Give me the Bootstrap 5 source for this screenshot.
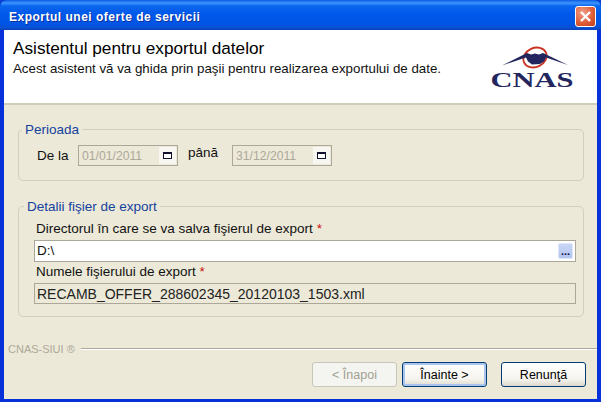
<!DOCTYPE html>
<html lang="ro">
<head>
    <meta charset="UTF-8">
    <title>Exportul unei oferte de servicii</title>
    <link href="https://cdn.jsdelivr.net/npm/bootstrap@5.3.2/dist/css/bootstrap.min.css" rel="stylesheet">
    <style>
        html, body { margin: 0; width: 601px; height: 402px; overflow: hidden; background: #0a3fd0; }
        body { font-family: "Liberation Sans", Arial, sans-serif; font-size: 13.5px; color: #111; line-height: 14px; }
        .xp-window { width: 601px; height: 402px; background: #0831d9; border-radius: 7px 7px 0 0; }
        .xp-title { height: 30px; padding: 3px 5px 0 9px; border-radius: 7px 7px 0 0;
            background: linear-gradient(180deg, #0a5ae0 0, #3d95ff 3px, #0a66ee 6px, #0058ea 14px, #0055e5 24px, #0a4fd0 28px, #0840b8 30px); }
        .xp-title-text { color: #fff; font-weight: 700; font-size: 12px; letter-spacing: .5px; text-shadow: 1px 1px 0 #0f2e9a; margin-top: 1px; }
        .xp-close { width: 21px; height: 21px; border: 1px solid #fff; border-radius: 3px; padding: 0;
            background: radial-gradient(circle at 35% 30%, #f0a08a, #e0603a 55%, #c03a18); }
        .xp-close svg { display: block; margin: 3px; }
        .xp-body { height: 369px; margin: 0 4px 3px 4px; background: #ece9d8; }
        .wiz-head { height: 75px; background: #fff; border-bottom: 2px solid #cfccb8; padding: 8px 22px 0 9px; }
        .wiz-heading { font-size: 17.2px; line-height: 20px; margin: 0; font-weight: 400; color: #000; }
        .wiz-sub { font-size: 13.3px; line-height: 14px; margin-top: 4px; }
        .wiz-logo { margin-top: 8px; flex: none; }
        .wiz-main { height: 243px; padding: 17px 13px 0 14px; }
        .grp { border: 1px solid #d0d0bf; border-radius: 5px; margin: 0; padding: 0 7px 0 15px; }
        .grp legend { float: none; width: auto; font-size: 13.5px; line-height: 15px; color: #15429e; margin: 0 0 0 -12px; padding: 0 3px; }
        .grp-period { height: 59px; }
        .grp-file { height: 118px; margin-top: 18px; }
        .grp-file legend { margin-left: -10px; }
        .period-row { padding-left: 3px; margin-top: 8px; }
        .lbl-from { width: 41px; }
        .lbl-to { width: 54px; padding-left: 10px; margin-top: -5px; }
        .date-box { width: 100px; height: 21px; border: 1px solid #aca899; padding: 0 1px 0 3px; color: #aca899; background: #ece9d8; font-size: 12.2px; }
        .date-btn { width: 17px; height: 17px; background: #f7f6f0; }
        .date-btn i { display: block; width: 9px; height: 7px; margin: 5px 4px; border: 1px solid #101030; border-top-width: 2px; background: #fff; }
        .field-lbl { height: 26px; padding: 8px 0 0 2px; }
        .req { color: #d01010; }
        .path-box { height: 22px; border: 1px solid #aca899; background: #fff; padding: 0 2px 0 2px; }
        .browse-btn { width: 15px; height: 16px; background: linear-gradient(180deg, #c9d6f5, #b2c5f0); border: 1px solid #dfe6f8; border-radius: 2px; color: #10104a; font-weight: 700; font-size: 11px; line-height: 14px; text-align: center; }
        .name-lbl { height: 21px; padding-top: 3px; }
        .name-box { height: 21px; border: 1px solid #aca899; background: #ece9d8; padding: 0 2px; color: #222; font-size: 14px; }
        .wiz-foot { height: 49px; }
        .brand-row { height: 12px; margin-top: -5px; padding-left: 4px; color: #aca899; font-size: 11px; }
        .brand-line { border-top: 1px solid #aca899; border-bottom: 1px solid #fff; height: 2px; margin-left: 6px; }
        .btn-row { margin-top: 7px; padding-right: 11px; gap: 5px; }
        .xp-btn { width: 85px; height: 25px; font-size: 12.5px; line-height: 14px; padding: 0; border: 1px solid #003c74; border-radius: 3px; color: #000;
            background: linear-gradient(180deg, #fff 0, #f5f4ee 70%, #dcd8cc 100%); }
        .xp-btn:disabled { border-color: #c9c7ba; color: #a1a192; background: #f4f4f0; opacity: 1; }
        .xp-btn-default { box-shadow: inset 0 0 0 2px #a9c4ee; }
        .xp-btn-last { margin-left: 9px; }
    </style>
</head>
<body>
    <div class="xp-window">
        <div class="xp-title d-flex align-items-center justify-content-between">
            <span class="xp-title-text">Exportul unei oferte de servicii</span>
            <button class="xp-close" type="button" aria-label="Inchide">
                <svg width="13" height="13" viewBox="0 0 13 13"><path d="M2 2 L11 11 M11 2 L2 11" stroke="#fff" stroke-width="2.4"/></svg>
            </button>
        </div>
        <div class="xp-body">
            <div class="wiz-head d-flex justify-content-between">
                <div>
                    <h1 class="wiz-heading">Asistentul pentru exportul datelor</h1>
                    <div class="wiz-sub">Acest asistent vă va ghida prin paşii pentru realizarea exportului de date.</div>
                </div>
                <svg class="wiz-logo" width="85" height="46" viewBox="0 -1 85 46">
                    <ellipse cx="45" cy="10.5" rx="12" ry="9.5" fill="none" stroke="#c8321e" stroke-width="1.8" transform="rotate(-25 45 10.5)"/>
                    <path d="M12 18.5 L37 6 L41 7.5 L45 6.5 L49 7.5 L53 6 L78 18 L56 10.5 L54 14.5 L50 17 L42 17.5 L38 14.5 L36 10.5 Z" fill="#23265e"/>
                    <text x="42" y="40" text-anchor="middle" font-family="Liberation Serif, serif" font-weight="700" font-size="22" fill="#23265e" textLength="83" lengthAdjust="spacingAndGlyphs">CNAS</text>
                </svg>
            </div>
            <div class="wiz-main">
                <fieldset class="grp grp-period">
                    <legend>Perioada</legend>
                    <div class="period-row d-flex align-items-center">
                        <span class="lbl-from">De la</span>
                        <div class="date-box d-flex align-items-center justify-content-between">
                            <span>01/01/2011</span><span class="date-btn"><i></i></span>
                        </div>
                        <span class="lbl-to">până</span>
                        <div class="date-box d-flex align-items-center justify-content-between">
                            <span>31/12/2011</span><span class="date-btn"><i></i></span>
                        </div>
                    </div>
                </fieldset>
                <fieldset class="grp grp-file">
                    <legend>Detalii fişier de export</legend>
                    <div class="field-lbl">Directorul în care se va salva fişierul de export <span class="req">*</span></div>
                    <div class="path-box d-flex align-items-center justify-content-between">
                        <span>D:\</span><span class="browse-btn">...</span>
                    </div>
                    <div class="field-lbl name-lbl">Numele fişierului de export <span class="req">*</span></div>
                    <div class="name-box d-flex align-items-center">RECAMB_OFFER_288602345_20120103_1503.xml</div>
                </fieldset>
            </div>
            <div class="wiz-foot">
                <div class="brand-row d-flex align-items-center">
                    <span>CNAS-SIUI ®</span>
                    <div class="brand-line flex-grow-1"></div>
                </div>
                <div class="btn-row d-flex justify-content-end">
                    <button class="xp-btn" type="button" disabled>&lt; Înapoi</button>
                    <button class="xp-btn xp-btn-default" type="button">Înainte &gt;</button>
                    <button class="xp-btn xp-btn-last" type="button">Renunţă</button>
                </div>
            </div>
        </div>
    </div>
    <script src="https://cdn.jsdelivr.net/npm/bootstrap@5.3.2/dist/js/bootstrap.bundle.min.js"></script>
</body>
</html>
